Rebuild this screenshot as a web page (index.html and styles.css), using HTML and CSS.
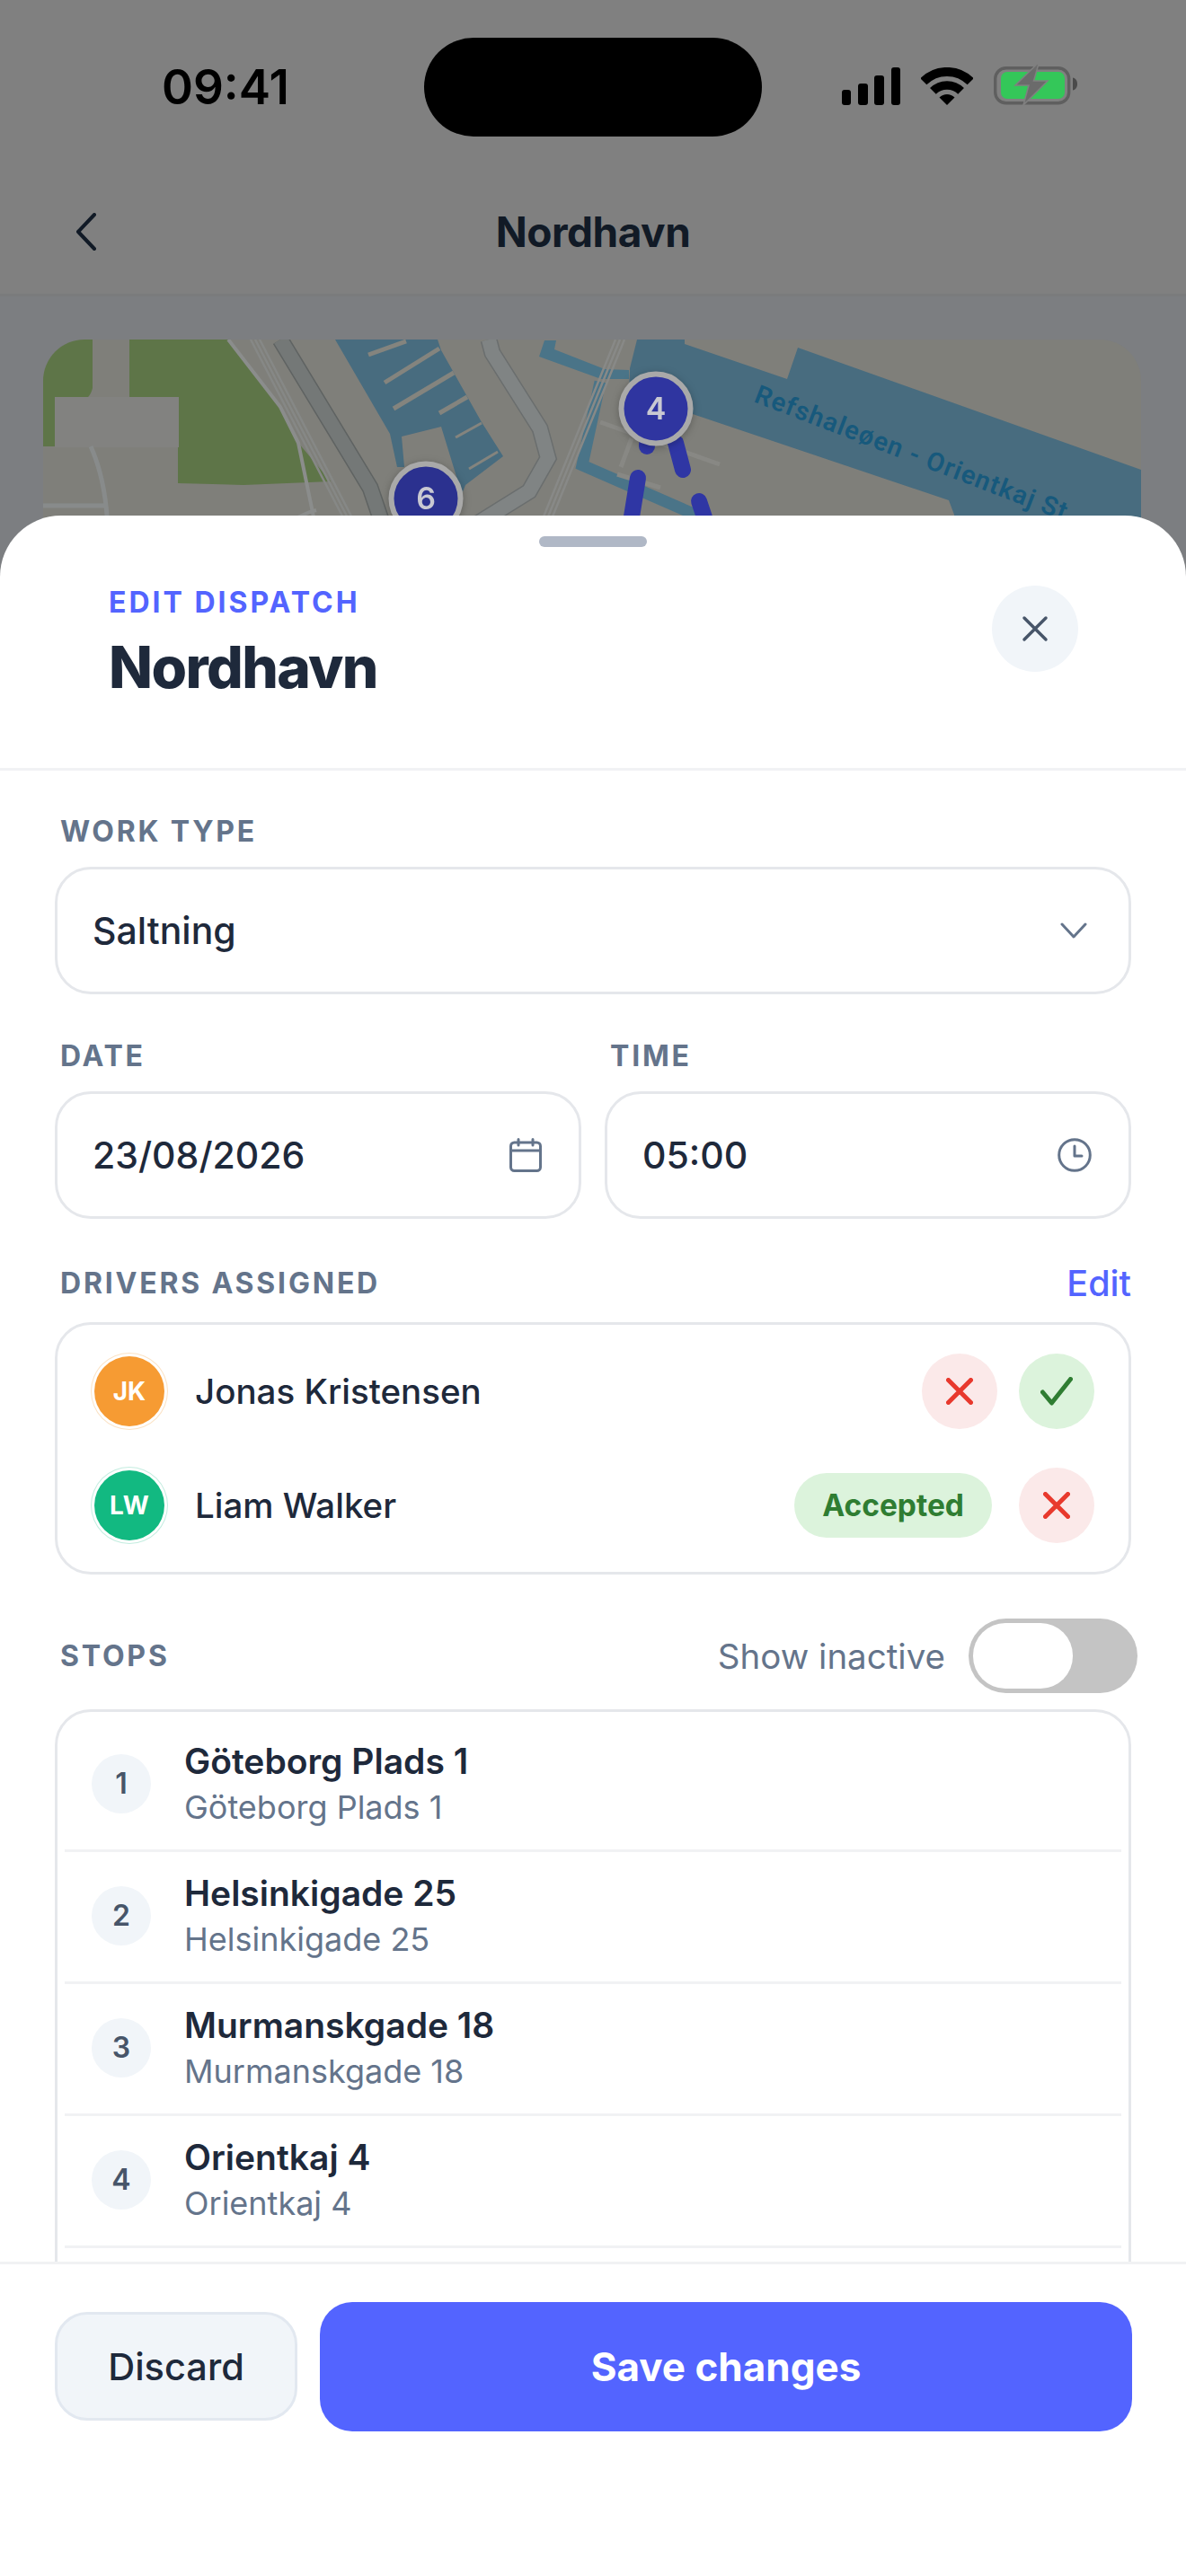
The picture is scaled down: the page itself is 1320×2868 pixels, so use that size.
FILE: index.html
```html
<!DOCTYPE html>
<html>
  <head>
    <meta charset="UTF-8">
    <title>Edit dispatch</title>
    <link rel="stylesheet" href="styles.css">
  </head>
  <body>
    <div class="screen">
      <!-- Page behind the sheet -->
      <div class="status-bar">
        <div class="status-time">09:41</div>
        <div class="island"></div>
        <div class="status-icons">
          <svg class="icon-signal" width="66" height="42" viewBox="0 0 66 42">
            <rect x="0" y="25" width="10" height="17" rx="3"/>
            <rect x="18" y="18" width="11" height="24" rx="3"/>
            <rect x="36" y="9" width="11" height="33" rx="3"/>
            <rect x="55" y="0" width="10" height="42" rx="3"/>
          </svg>
          <svg class="icon-wifi" width="58" height="42" viewBox="0 0 58 42">
            <path d="M2.8 15.8A37 37 0 0 1 55.2 15.8" fill="none" stroke="#000" stroke-width="10"/>
            <path d="M13.4 26.4A22 22 0 0 1 44.6 26.4" fill="none" stroke="#000" stroke-width="9.5"/>
            <path d="M29 42L20.5 33.5A12 12 0 0 1 37.5 33.5Z"/>
          </svg>
          <svg class="icon-battery" width="94" height="46" viewBox="0 0 94 46">
            <rect x="1.7" y="4.7" width="82" height="39" rx="12" fill="none" stroke="#5f5f5f" stroke-width="3.4"/>
            <rect x="8" y="9" width="71" height="30" rx="7" fill="#34c759"/>
            <path d="M88 15.5C91 16 93 18.500 93 22.500C93 26.500 91 29 88 29.500Z" fill="#4a4a4a"/>
            <path d="M48.500 0L24 24H39L33 46L60 19H44.500L50 0Z" fill="#6b6b6b" stroke="#808080" stroke-width="1.500"/>
          </svg>
        </div>
      </div>

      <div class="nav-bar">
        <svg class="nav-back" width="24" height="42" viewBox="0 0 24 42">
          <path d="M21 2L3 21L21 40" fill="none" stroke="#111a26" stroke-width="4" stroke-linecap="round" stroke-linejoin="round"/>
        </svg>
        <div class="nav-title">Nordhavn</div>
      </div>

      <div class="page-content">
        <svg class="map" viewBox="48 378 1222 300">
          <rect x="48" y="378" width="1222" height="300" fill="#7f7f7a"/>
          <!-- parks -->
          <path d="M48 378H103V432Q100 446 86 447Q78 447 78 442H61V476L66 478V497H48Z" fill="#5e7548"/>
          <path d="M144 378H254L312 453L332 493L368 536L271 540L198 538V442H144Z" fill="#5e7548"/>
          <rect x="61" y="442" width="138" height="56" fill="#828280"/>
          <!-- water -->
          <path d="M373 378H487L491 390L536 470L560 508L518 540L514 550L491 475L447 486L450 520L442 520L434 483Z" fill="#486c7f"/>
          <path d="M709 378H762V383L876 422L888 387L1270 523V678H1062V573L1056 557L768 460L700 440L701 410Z" fill="#486c7f"/>
          <path d="M606 379H619L617 389L673 411L700 412V422H669L600 397Z" fill="#4a7488"/>
          <path d="M668 425L648 518L774 573" fill="none" stroke="#4a7488" stroke-width="13"/>
          <!-- piers -->
          <g stroke="#84847e" stroke-width="5" fill="none">
            <path d="M410 395L452 380"/>
            <path d="M428 426L489 388"/>
            <path d="M438 455L505 415"/>
            <path d="M489 460L520 442"/>
            <path d="M507 487L536 471" stroke-width="3"/>
            <path d="M522 522L554 503" stroke-width="3"/>
          </g>
          <!-- roads -->
          <g fill="none">
            <path d="M312 378L412 543L428 590" stroke="#5f6362" stroke-width="19"/>
            <path d="M312 378L412 543L428 590" stroke="#747877" stroke-width="16"/>
            <path d="M544 378L548 393L601 477L610 510L589 547L520 590" stroke="#6a6e6e" stroke-width="19"/>
            <path d="M544 378L548 393L601 477L610 510L589 547L520 590" stroke="#808484" stroke-width="16"/>
            <path d="M254 378L312 453L332 493L352 590" stroke="#8b8d8c" stroke-width="4"/>
            <path d="M279 378L389 590M284 378L394 590M289 378L399 590" stroke="#868886" stroke-width="2.500"/>
            <path d="M101 497Q118 535 120 590M48 563H116" stroke="#888b8b" stroke-width="5"/>
            <path d="M300 590L345 570L352 568" stroke="#8b8d8c" stroke-width="4"/>
            <path d="M695 378L609 590M690 378L604 590M685 378L599 590" stroke="#888987" stroke-width="2.500"/>
            <path d="M668 470L801 517M687 528L735 543M703 488L691 520" stroke="#888884" stroke-width="5"/>
          </g>
          <!-- route -->
          <g fill="none" stroke="#2f36a4" stroke-width="18" stroke-linecap="round">
            <path d="M752 493L760 523"/>
            <path d="M720 495V497"/>
            <path d="M710 532L699 600"/>
            <path d="M778 558L792 600"/>
          </g>
          <text class="map-label" x="838" y="447" transform="rotate(21 838 447)">Refshaleøen - Orientkaj St</text>
          <!-- stop pins -->
          <g class="map-pin">
            <circle cx="474" cy="555" r="38.500" fill="#2b318f" stroke="#a9a9a9" stroke-width="6"/>
            <text x="474" y="567">6</text>
          </g>
          <g class="map-pin">
            <circle cx="730" cy="455" r="38.500" fill="#2f35a0" stroke="#a9a9a9" stroke-width="6"/>
            <text x="730" y="467">4</text>
          </g>
        </svg>
      </div>

      <!-- Edit sheet -->
      <div class="sheet">
        <div class="handle"></div>
        <div class="sheet-header">
          <div>
            <div class="eyebrow">EDIT DISPATCH</div>
            <div class="sheet-title">Nordhavn</div>
          </div>
          <div class="close-btn">
            <svg width="30" height="30" viewBox="0 0 30 30">
              <path d="M3 3L27 27M27 3L3 27" fill="none" stroke="#475569" stroke-width="3.500" stroke-linecap="round"/>
            </svg>
          </div>
        </div>

        <div class="sheet-body">
          <div class="label">WORK TYPE</div>
          <div class="field">
            <span>Saltning</span>
            <svg class="field-chevron" width="30" height="18" viewBox="0 0 30 18">
              <path d="M2 2L15 16L28 2" fill="none" stroke="#64748b" stroke-width="3" stroke-linecap="round" stroke-linejoin="round"/>
            </svg>
          </div>

          <div class="two-col">
            <div>
              <div class="label">DATE</div>
              <div class="field">
                <span>23/08/2026</span>
                <svg width="36" height="38" viewBox="0 0 36 38">
                  <rect x="1.500" y="5" width="33" height="31.500" rx="4" fill="none" stroke="#64748b" stroke-width="3"/>
                  <path d="M1.500 14H34.500M10 1.500V8M26 1.500V8" fill="none" stroke="#64748b" stroke-width="3" stroke-linecap="round"/>
                </svg>
              </div>
            </div>
            <div>
              <div class="label">TIME</div>
              <div class="field">
                <span>05:00</span>
                <svg width="38" height="38" viewBox="0 0 38 38">
                  <circle cx="19" cy="19" r="17.300" fill="none" stroke="#64748b" stroke-width="3"/>
                  <path d="M19 9V20H27" fill="none" stroke="#64748b" stroke-width="3" stroke-linecap="round" stroke-linejoin="round"/>
                </svg>
              </div>
            </div>
          </div>

          <div class="section-head drivers-head">
            <div class="label label-flat">DRIVERS ASSIGNED</div>
            <div class="edit-link">Edit</div>
          </div>
          <div class="card drivers">
            <div class="driver">
              <div class="avatar avatar-orange">JK</div>
              <div class="driver-name">Jonas Kristensen</div>
              <div class="round-btn btn-red">
                <svg width="30" height="30" viewBox="0 0 30 30"><path d="M2.500 2.500L27.500 27.500M27.500 2.500L2.500 27.500" fill="none" stroke="#e8392d" stroke-width="5" stroke-linecap="round"/></svg>
              </div>
              <div class="round-btn btn-green">
                <svg width="36" height="32" viewBox="0 0 36 32"><path d="M2.500 17L12.500 29L33.500 2.500" fill="none" stroke="#2f7d32" stroke-width="5" stroke-linecap="round" stroke-linejoin="round"/></svg>
              </div>
            </div>
            <div class="driver">
              <div class="avatar avatar-green">LW</div>
              <div class="driver-name">Liam Walker</div>
              <div class="pill">Accepted</div>
              <div class="round-btn btn-red">
                <svg width="30" height="30" viewBox="0 0 30 30"><path d="M2.500 2.500L27.500 27.500M27.500 2.500L2.500 27.500" fill="none" stroke="#e8392d" stroke-width="5" stroke-linecap="round"/></svg>
              </div>
            </div>
          </div>

          <div class="section-head stops-head">
            <div class="label label-flat">STOPS</div>
            <div class="toggle-wrap">
              <span class="toggle-text">Show inactive</span>
              <div class="toggle"><div class="knob"></div></div>
            </div>
          </div>
          <div class="card stops">
            <div class="stop">
              <div class="stop-num">1</div>
              <div>
                <div class="stop-title">Göteborg Plads 1</div>
                <div class="stop-sub">Göteborg Plads 1</div>
              </div>
            </div>
            <div class="stop">
              <div class="stop-num">2</div>
              <div>
                <div class="stop-title">Helsinkigade 25</div>
                <div class="stop-sub">Helsinkigade 25</div>
              </div>
            </div>
            <div class="stop">
              <div class="stop-num">3</div>
              <div>
                <div class="stop-title">Murmanskgade 18</div>
                <div class="stop-sub">Murmanskgade 18</div>
              </div>
            </div>
            <div class="stop">
              <div class="stop-num">4</div>
              <div>
                <div class="stop-title">Orientkaj 4</div>
                <div class="stop-sub">Orientkaj 4</div>
              </div>
            </div>
          </div>
        </div>

        <div class="sheet-footer">
          <div class="btn-discard">Discard</div>
          <div class="btn-save">Save changes</div>
        </div>
      </div>
    </div>
  </body>
</html>
```

FILE: styles.css
```css
* {
  box-sizing: border-box;
  margin: 0;
  padding: 0;
}

html, body {
  width: 1320px;
  height: 2868px;
  overflow: hidden;
  background-color: #ffffff;
  font-family: Inter, "Noto Sans", sans-serif;
}

.screen {
  position: relative;
  width: 1320px;
  height: 2868px;
  overflow: hidden;
  background-color: #7c7e81;
}

/* Status bar */
.status-bar {
  display: grid;
  grid-template-columns: 472px 376px 472px;
  height: 188px;
  padding-top: 42px;
  background-color: #808080;
}

.status-time {
  height: 110px;
  padding-left: 180px;
  line-height: 110px;
  font-size: 53px;
  font-weight: 600;
  color: #000000;
}

.island {
  height: 110px;
  border-radius: 55px;
  background-color: #000000;
}

.status-icons {
  display: flex;
  align-items: flex-start;
  padding-left: 89px;
  padding-top: 33px;
}

.icon-wifi {
  margin-left: 22px;
}

.icon-battery {
  margin-left: 23px;
  margin-top: -4px;
}

/* Nav bar */
.nav-bar {
  position: relative;
  display: flex;
  align-items: center;
  justify-content: center;
  height: 142px;
  border-bottom: 3px solid #7a7b7c;
  background-color: #808080;
}

.nav-back {
  position: absolute;
  left: 84px;
  top: 49px;
}

.nav-title {
  font-size: 46px;
  font-weight: 700;
  letter-spacing: -0.5px;
  color: #111a26;
}

.page-content {
  padding: 48px 50px 0 48px;
}

.map {
  display: block;
  width: 1222px;
  height: 300px;
  border-radius: 46px 46px 0 0;
}

.map-label {
  font-family: Roboto, Inter, sans-serif;
  font-size: 29px;
  font-weight: 600;
  letter-spacing: 1.200px;
  fill: #17597c;
}

.map-pin {
  filter: drop-shadow(0 2px 4px rgba(0, 0, 0, 0.25));
}

.map-pin text {
  font-family: Inter, sans-serif;
  font-size: 34px;
  font-weight: 600;
  text-anchor: middle;
  fill: #c9c9d2;
}

/* Sheet */
.sheet {
  position: absolute;
  left: 0;
  right: 0;
  top: 574px;
  bottom: 0;
  display: flex;
  flex-direction: column;
  border-radius: 68px 68px 0 0;
  background-color: #ffffff;
  overflow: hidden;
}

.handle {
  flex: none;
  width: 120px;
  height: 12px;
  margin: 23px auto 0;
  border-radius: 6px;
  background-color: #b0b8c6;
}

.sheet-header {
  flex: none;
  display: flex;
  justify-content: space-between;
  align-items: flex-start;
  padding: 43px 120px 74px 121px;
  border-bottom: 3px solid #f1f2f4;
}

.eyebrow {
  line-height: 38px;
  font-size: 32px;
  font-weight: 700;
  letter-spacing: 3px;
  color: #5364ff;
}

.sheet-title {
  margin-top: 15px;
  line-height: 76px;
  font-size: 64px;
  font-weight: 800;
  letter-spacing: -1.600px;
  color: #1e293b;
}

.close-btn {
  display: flex;
  align-items: center;
  justify-content: center;
  width: 96px;
  height: 96px;
  border-radius: 50%;
  background-color: #f1f5f9;
}

.sheet-body {
  flex: 1;
  min-height: 0;
  overflow: hidden;
  padding: 49px 61px 0;
}

.label {
  line-height: 38px;
  margin-bottom: 20px;
  padding-left: 6px;
  font-size: 32px;
  font-weight: 700;
  letter-spacing: 2.800px;
  color: #64748b;
}

.label-flat {
  margin-bottom: 0;
}

.field {
  display: flex;
  align-items: center;
  justify-content: space-between;
  height: 142px;
  padding: 0 41px 0 39px;
  border: 3px solid #e5e7eb;
  border-radius: 40px;
  font-size: 41px;
  font-weight: 500;
  color: #1e293b;
}

.field-chevron {
  margin-right: 5px;
}

.two-col {
  display: grid;
  grid-template-columns: 586px 586px;
  gap: 26px;
  margin-top: 50px;
}

.section-head {
  display: flex;
  align-items: center;
  justify-content: space-between;
}

.drivers-head {
  margin-top: 53px;
  margin-bottom: 24px;
}

.edit-link {
  line-height: 38px;
  font-size: 39.500px;
  font-weight: 500;
  color: #5364ff;
}

.card {
  border: 3px solid #e5e7eb;
  border-radius: 40px;
}

/* Drivers */
.drivers {
  display: flex;
  flex-direction: column;
  gap: 43px;
  padding: 32px 38px;
}

.driver {
  display: flex;
  align-items: center;
  height: 84px;
  gap: 24px;
}

.avatar {
  display: flex;
  align-items: center;
  justify-content: center;
  flex: none;
  width: 78px;
  height: 78px;
  margin: 3px;
  border-radius: 50%;
  font-size: 28px;
  font-weight: 700;
  color: #ffffff;
}

.avatar-orange {
  background-color: #f69b33;
  box-shadow: 0 0 0 3px #ffffff, 0 0 0 4px #fbe3c6;
}

.avatar-green {
  background-color: #12b981;
  box-shadow: 0 0 0 3px #ffffff, 0 0 0 4px #c4ede0;
}

.driver-name {
  flex: 1;
  margin-left: 7px;
  font-size: 38.500px;
  font-weight: 500;
  color: #1e293b;
}

.round-btn {
  display: flex;
  align-items: center;
  justify-content: center;
  flex: none;
  width: 84px;
  height: 84px;
  border-radius: 50%;
}

.btn-red {
  background-color: #fbe9e9;
}

.btn-green {
  background-color: #dcf3dc;
}

.pill {
  height: 72px;
  margin-right: 6px;
  padding: 0 31px;
  border-radius: 36px;
  line-height: 72px;
  font-size: 33.500px;
  font-weight: 700;
  background-color: #dcf3dc;
  color: #2f7d32;
}

/* Stops */
.stops-head {
  margin-top: 49px;
  margin-bottom: 18px;
}

.toggle-wrap {
  display: flex;
  align-items: center;
  gap: 26px;
  margin-right: -7px;
}

.toggle-text {
  font-size: 38.500px;
  font-weight: 400;
  color: #64748b;
}

.toggle {
  width: 188px;
  height: 83px;
  padding: 5px;
  border-radius: 42px;
  background-color: #c4c4c4;
}

.knob {
  width: 111px;
  height: 73px;
  border-radius: 36px;
  background-color: #ffffff;
}

.stops {
  padding: 9px 8px 60px;
}

.stop {
  display: flex;
  align-items: center;
  gap: 37px;
  height: 147px;
  padding: 0 0 3px 30px;
  border-bottom: 3px solid #f1f2f4;
}

.stop-num {
  display: flex;
  align-items: center;
  justify-content: center;
  flex: none;
  width: 66px;
  height: 66px;
  border-radius: 50%;
  font-size: 32px;
  font-weight: 600;
  background-color: #f1f5f9;
  color: #475569;
}

.stop-title {
  line-height: 48px;
  font-size: 39px;
  font-weight: 600;
  color: #1e293b;
}

.stop-sub {
  margin-top: 5px;
  line-height: 44px;
  font-size: 36px;
  color: #64748b;
}

/* Footer */
.sheet-footer {
  flex: none;
  display: flex;
  align-items: center;
  gap: 25px;
  height: 350px;
  padding: 41px 60px 161px 61px;
  border-top: 3px solid #f1f2f4;
  background-color: #ffffff;
}

.btn-discard {
  display: flex;
  align-items: center;
  justify-content: center;
  flex: none;
  width: 270px;
  height: 121px;
  border: 3px solid #e2e8f0;
  border-radius: 36px;
  font-size: 41.500px;
  font-weight: 500;
  background-color: #f1f5f9;
  color: #1e293b;
}

.btn-save {
  display: flex;
  align-items: center;
  justify-content: center;
  flex: 1;
  height: 144px;
  border-radius: 36px;
  font-size: 44px;
  font-weight: 700;
  background-color: #5364ff;
  color: #ffffff;
}
```
